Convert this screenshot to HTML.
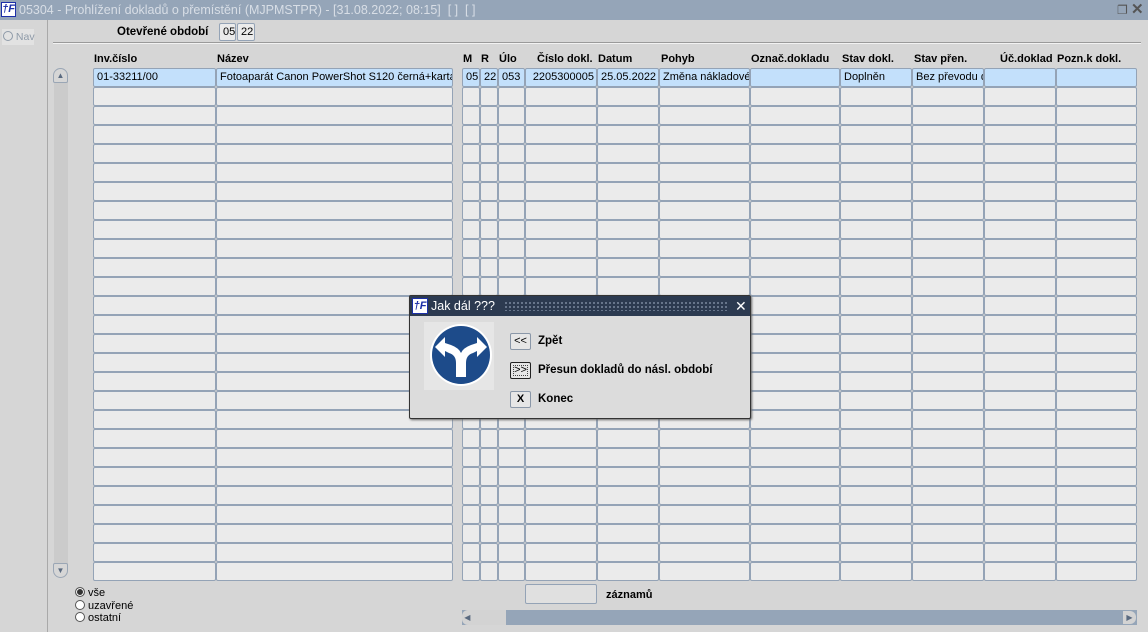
<!DOCTYPE html>
<html><head><meta charset="utf-8">
<style>
body{margin:0;width:1148px;height:632px;background:#d6d6d6;font-family:"Liberation Sans",Arial,sans-serif;font-size:11px;position:relative;overflow:hidden}
.a{position:absolute}
.title{left:0;top:0;width:1148px;height:20px;background:#95a5b8;color:#d8dee6;font-size:12.5px;line-height:20px}
.c{position:absolute;box-sizing:border-box;border:1px solid #94a3b6;border-radius:2px;background:#ebebeb;height:19px;font-size:11px;line-height:17px;padding-left:3px;white-space:nowrap;overflow:hidden;color:#000}
.sel{background:#c3e0fb}
.h{position:absolute;top:53px;font-weight:bold;font-size:11px}
.btn{position:absolute;left:100px;width:21px;height:17px;box-sizing:border-box;border:1px solid #8a97a8;background:#e6e6e6;font-size:11px;text-align:center;line-height:15px;border-radius:2px}
</style></head><body>
<div class="a title"><span class="a" style="left:1px;top:2px;width:15px;height:15px;background:#fff;border:1px solid #1b2fa8;box-sizing:border-box;color:#1b2fa8;font-weight:bold;font-style:italic;font-size:11px;line-height:13px;text-align:center">†F</span><span class="a" style="left:19px">05304 - Prohlížení dokladů o přemístění (MJPMSTPR) - [31.08.2022; 08:15]&nbsp; [ ]&nbsp; [ ]</span>
<span class="a" style="left:1117px;top:0;color:#555;font-size:12px">❐</span><span class="a" style="left:1131px;top:0;color:#555;font-size:15px;font-weight:bold">✕</span></div>
<div class="a" style="left:47px;top:20px;width:1px;height:612px;background:#a9a9a9"></div>
<div class="a" style="left:2px;top:29px;width:32px;height:16px;background:#e2e2e2;color:#8e9aa8;font-size:10.5px;line-height:16px;white-space:nowrap"><span style="display:inline-block;width:8px;height:8px;border:1px solid #8e9aa8;border-radius:50%;vertical-align:-1px;margin-left:1px"></span> Nav</div>
<div class="a" style="left:117px;top:26px;font-weight:bold;font-size:11.5px">Otevřené období</div>
<div class="c" style="left:219px;top:23px;width:17px;height:18px;background:#ebebeb">05</div>
<div class="c" style="left:237px;top:23px;width:18px;height:18px">22</div>
<div class="a" style="left:53px;top:42px;width:1088px;height:1px;background:#9a9a9a"></div>
<div class="a" style="left:53px;top:43px;width:1088px;height:1px;background:#f2f2f2"></div>
<div class="h" style="left:94px">Inv.číslo</div><div class="h" style="left:217px">Název</div>
<div class="h" style="left:463px">M</div><div class="h" style="left:481px">R</div><div class="h" style="left:499px">Úlo</div>
<div class="h" style="left:537px">Číslo dokl.</div><div class="h" style="left:598px">Datum</div><div class="h" style="left:661px">Pohyb</div>
<div class="h" style="left:751px">Označ.dokladu</div><div class="h" style="left:842px">Stav dokl.</div><div class="h" style="left:914px">Stav přen.</div>
<div class="h" style="left:1000px">Úč.doklad</div><div class="h" style="left:1057px">Pozn.k dokl.</div>
<div class="a" style="left:54px;top:70px;width:14px;height:508px;background:#cbcbcb;border-radius:7px"></div>
<div class="a" style="left:53px;top:68px;width:15px;height:15px;border:1px solid #9aa6b5;border-radius:8px 8px 2px 2px;background:#d6d6d6;box-sizing:border-box;color:#5a6a80;font-size:8px;text-align:center;line-height:13px">▲</div>
<div class="a" style="left:53px;top:563px;width:15px;height:15px;border:1px solid #9aa6b5;border-radius:2px 2px 8px 8px;background:#d6d6d6;box-sizing:border-box;color:#5a6a80;font-size:8px;text-align:center;line-height:13px">▼</div>
<div id="grid">
<div class="c sel" style="left:93px;top:68px;width:123px">01-33211/00</div>
<div class="c sel" style="left:216px;top:68px;width:237px">Fotoaparát Canon PowerShot S120 černá+karta</div>
<div class="c sel" style="left:462px;top:68px;width:18px">05</div>
<div class="c sel" style="left:480px;top:68px;width:18px">22</div>
<div class="c sel" style="left:498px;top:68px;width:27px">053</div>
<div class="c sel" style="left:525px;top:68px;width:72px;text-align:right;padding-right:2px">2205300005</div>
<div class="c sel" style="left:597px;top:68px;width:62px">25.05.2022</div>
<div class="c sel" style="left:659px;top:68px;width:91px">Změna nákladové</div>
<div class="c sel" style="left:750px;top:68px;width:90px"></div>
<div class="c sel" style="left:840px;top:68px;width:72px">Doplněn</div>
<div class="c sel" style="left:912px;top:68px;width:72px">Bez převodu d</div>
<div class="c sel" style="left:984px;top:68px;width:72px"></div>
<div class="c sel" style="left:1056px;top:68px;width:81px"></div>
</div>
<script>
var cols=[[93,123],[216,237],[462,18],[480,18],[498,27],[525,72],[597,62],[659,91],[750,90],[840,72],[912,72],[984,72],[1056,81]];
var g=document.getElementById('grid'),h='';
for(var r=1;r<27;r++){var t=68+r*19;for(var i=0;i<cols.length;i++)h+='<div class="c" style="left:'+cols[i][0]+'px;top:'+t+'px;width:'+cols[i][1]+'px"></div>';}
g.insertAdjacentHTML('beforeend',h);
</script>
<div class="a" style="left:75px;top:587px;font-size:11px;line-height:12.5px">
<div><span style="display:inline-block;width:8px;height:8px;border:1px solid #555;border-radius:50%;background:#333;box-shadow:inset 0 0 0 1px #fff;vertical-align:-1px"></span> vše</div>
<div><span style="display:inline-block;width:8px;height:8px;border:1px solid #555;border-radius:50%;background:#fff;vertical-align:-1px"></span> uzavřené</div>
<div><span style="display:inline-block;width:8px;height:8px;border:1px solid #555;border-radius:50%;background:#fff;vertical-align:-1px"></span> ostatní</div></div>
<div class="c" style="left:525px;top:584px;width:72px;height:20px;background:#e0e0e0"></div>
<div class="a" style="left:606px;top:589px;font-weight:bold;font-size:11px">záznamů</div>
<div class="a" style="left:462px;top:610px;width:675px;height:15px;background:#95a5b8"></div>
<div class="a" style="left:462px;top:610px;width:44px;height:15px;background:#d3d3d3;border-radius:6px 0 0 6px;color:#5a6a80;font-size:8px;line-height:15px">&nbsp;◀</div>
<div class="a" style="left:1123px;top:611px;width:13px;height:13px;background:#d3d3d3;border-radius:0 6px 6px 0;color:#5a6a80;font-size:8px;line-height:13px;text-align:center">▶</div>
<div class="a" style="left:409px;top:295px;width:342px;height:124px;background:#dcdcdc;border:1px solid #333;box-sizing:border-box;border-radius:2px;box-shadow:1px 1px 2px #666">
<div class="a" style="left:0;top:0;width:340px;height:20px;background:#2c3a50;color:#fff;font-size:12.5px;line-height:20px">
<span class="a" style="left:2px;top:2px;width:16px;height:16px;background:#fff;border:1px solid #1b2fa8;box-sizing:border-box;color:#1b2fa8;font-weight:bold;font-style:italic;font-size:11px;line-height:14px;text-align:center">†F</span>
<span class="a" style="left:21px">Jak dál ???</span>
<span class="a" style="left:94px;top:5px;width:225px;height:10px;background-image:radial-gradient(#6c7a90 1px,transparent 1.2px);background-size:4px 4px"></span>
<span class="a" style="left:325px;top:0;font-size:14px">✕</span></div>
<div class="a" style="left:14px;top:26px;width:70px;height:68px;background:#e6e6e6"></div>
<svg class="a" style="left:19px;top:27px" width="64" height="64" viewBox="0 0 64 64"><circle cx="32" cy="32" r="31" fill="#fff"/><circle cx="32" cy="32" r="29" fill="#1d4b8a"/>
<path d="M27 54 V40 Q27 32 20 30 L16 28 L16 34 L6 24 L16 14 L16 20 L22 22 Q30 25 32 30 Q34 25 42 22 L48 20 L48 14 L58 24 L48 34 L48 28 L44 30 Q37 32 37 40 V54 Z" fill="#fff"/></svg>
<div class="btn" style="top:37px">&lt;&lt;</div>
<div class="btn" style="top:66px;border:1px solid #222;outline:1px dotted #444;outline-offset:-4px">&gt;&gt;</div>
<div class="btn" style="top:95px;font-weight:bold">X</div>
<div class="a" style="left:128px;top:39px;font-weight:bold;font-size:11.5px">Zpět</div>
<div class="a" style="left:128px;top:68px;font-weight:bold;font-size:11.5px">Přesun dokladů do násl. období</div>
<div class="a" style="left:128px;top:97px;font-weight:bold;font-size:11.5px">Konec</div>
</div>
</body></html>
